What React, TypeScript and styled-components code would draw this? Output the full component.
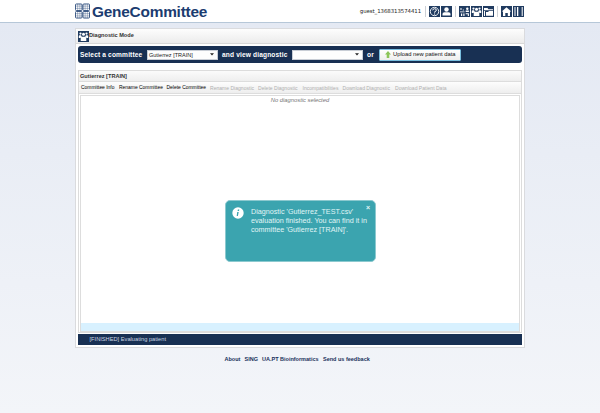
import React from 'react';
import styled, { createGlobalStyle } from 'styled-components';

const NAVY = '#18305a';
const BAR = '#183053';

const GlobalStyle = createGlobalStyle`
  * { box-sizing: border-box; }
  html, body { margin: 0; height: 413px; overflow: hidden; }
  body {
    font-family: 'Liberation Sans', Arial, sans-serif;
    background: linear-gradient(#e4e9f3 23px, #f3f5f9 413px);
    color: #222;
  }
`;

const Page = styled.div`
  position: relative;
  width: 600px;
  height: 413px;
  display: flex;
  flex-direction: column;
  align-items: center;
`;

const Header = styled.header`
  width: 600px;
  height: 23px;
  padding: 0 76px 0 75px;
  display: flex;
  align-items: center;
  background: #fff;
  border-bottom: 1px solid #b6c7d8;
`;

const Brand = styled.h1`
  margin: 1px auto 0 2px;
  font-size: 15.4px;
  line-height: 20px;
  font-weight: bold;
  letter-spacing: -0.22px;
  color: #1b3c70;
  white-space: nowrap;
`;

const User = styled.span`
  font: 5.4px/10px 'DejaVu Sans', Verdana, sans-serif;
  letter-spacing: -0.06px;
  color: #222;
  margin-right: 4px;
`;

const Tools = styled.nav`
  display: flex;
  gap: 1px;
  padding: 0 3px;
  border-left: 1px solid #ccd0d6;
  &:last-child { padding-right: 0; }
`;

const Icon = styled.svg`
  display: block;
  flex: none;
`;

const Main = styled.main`
  width: 450px;
  height: 320px;
  margin-top: 5px;
  padding: 0 2px;
  background: #fff;
  border: 1px solid #dadbde;
`;

const TitleBar = styled.div`
  height: 15px;
  margin: 0 -2px 2px;
  padding-left: 2px;
  display: flex;
  align-items: center;
  background: linear-gradient(#fdfdfd, #ececec);
  border-bottom: 1px solid #d8d8d8;
`;

const Title = styled.h2`
  margin: 0;
  font-size: 5.6px;
  line-height: 11px;
  font-weight: bold;
  color: #333;
`;

const ModeTitle = styled(Title)`
  padding-bottom: 1px;
`;

const Selector = styled.div`
  height: 17px;
  padding: 0 2px;
  display: flex;
  align-items: center;
  background: ${BAR};
  border-radius: 3px;
`;

const Prompt = styled.span<{ $width: number }>`
  width: ${p => p.$width}px;
  font: bold 6.6px/11px 'Liberation Sans', Arial, sans-serif;
  letter-spacing: 0.15px;
  white-space: nowrap;
  color: #fff;
`;

const Select = styled.div`
  width: 71px;
  height: 10px;
  margin-right: 4px;
  padding: 0 3px 0 1px;
  display: flex;
  align-items: center;
  justify-content: space-between;
  background: #fdfdfd;
  border: 1px solid #c8cdd5;
  font-size: 5.5px;
  line-height: 8px;
`;

const Upload = styled.button`
  width: 82px;
  height: 12px;
  padding: 0 0 0 5px;
  display: flex;
  align-items: center;
  gap: 2px;
  background: linear-gradient(#fff, #eee);
  border: 1px solid #79bfe0;
  border-radius: 1px;
  font: 5.8px/9px 'Liberation Sans', Arial, sans-serif;
  color: #111;
  white-space: nowrap;
`;

const Committee = styled.section`
  height: 263px;
  margin-top: 7px;
  border: 1px solid #dcdcdc;
  display: flex;
  flex-direction: column;
`;

const CommitteeHead = styled.div`
  height: 11px;
  padding-left: 1px;
  background: linear-gradient(#fbfbfb, #eee);
  border-bottom: 1px solid #ddd;
`;

const Menu = styled.div`
  height: 12px;
  padding-left: 2px;
  display: flex;
  align-items: center;
  background: linear-gradient(#fdfdfd, #eee);
  border-bottom: 1px solid #ddd;
`;

const MenuItem = styled.span<{ $width: number; $off?: boolean }>`
  width: ${p => p.$width}px;
  flex: none;
  font-size: ${p => (p.$off ? 5.05 : 4.95)}px;
  line-height: 10px;
  white-space: nowrap;
  color: ${p => (p.$off ? '#b0b0b0' : '#000')};
`;

const Content = styled.div`
  flex: 1;
  margin: 1px 1px 0;
  border: 1px solid #ddd;
  display: flex;
  flex-direction: column;
  justify-content: space-between;
  text-align: center;
  font-size: 5.8px;
  line-height: 8px;
  font-style: italic;
  color: #777;
`;

const Strip = styled.div`
  height: 8px;
  background: #d8f1ff;
`;

const Status = styled.div`
  height: 11px;
  margin-top: 1px;
  padding-left: 11.5px;
  background: ${BAR};
  color: #ccd6e2;
  font-size: 5.7px;
  line-height: 11px;
`;

const Footer = styled.footer`
  margin-top: 6px;
  width: 151px;
  display: flex;
  font-size: 5.5px;
  line-height: 10px;
  font-weight: bold;
  color: ${NAVY};
  white-space: nowrap;
`;

const Link = styled.a<{ $width: number }>`
  width: ${p => p.$width}px;
  flex: none;
`;

const Toast = styled.aside`
  position: absolute;
  left: 225px;
  top: 200px;
  width: 151px;
  height: 62px;
  padding: 6px;
  display: flex;
  gap: 7px;
  background: #3ba4af;
  border: 1px solid #8cc9cf;
  border-radius: 5px;
  color: #e0f5f6;
`;

const Message = styled.p`
  margin: 0;
  font-size: 7.2px;
  line-height: 9px;
  white-space: nowrap;
`;

const Close = styled.span`
  position: absolute;
  right: 5px;
  top: 2px;
  font-size: 7px;
  line-height: 9px;
  font-weight: bold;
`;

const quadrants = [[0.5, 0.5], [8.5, 0.5], [0.5, 8.5], [8.5, 8.5]];

function Logo() {
  return (
    <Icon width="15" height="16" viewBox="0 0 16 16" fill="none" stroke="#1d3f72">
      {quadrants.map(([x, y]) => (
        <g key={`${x}-${y}`} transform={`translate(${x} ${y})`}>
          <rect width="7" height="7" rx="1" strokeWidth=".9" />
          <path d="M2.3 0v7M4.7 0v7M0 2.3h7M0 4.7h7" strokeWidth=".6" opacity=".6" />
        </g>
      ))}
    </Icon>
  );
}

function Tool({ children }: { children: React.ReactNode }) {
  return (
    <Icon width="11" height="11" viewBox="0 0 11 11" fill="#fff">
      <rect width="11" height="11" fill="#203b60" />
      {children}
    </Icon>
  );
}

const group = (
  <>
    <circle cx="2.5" cy="2.6" r="1.1" />
    <circle cx="8.5" cy="2.6" r="1.1" />
    <circle cx="5.5" cy="3.3" r="1.5" />
    <path d="M.8 7V5q0-.8 1-.8h1.3q.2 1 .9 1.5L2.3 7ZM10.200 7V5q0-.8-1-.8H7.900q-.2 1-.9 1.500L8.700 7ZM2.700 10V7.500q0-1.800 1.500-1.800h2.600q1.500 0 1.500 1.800V10Z" />
  </>
);

const Caret = () => (
  <Icon width="4" height="3" viewBox="0 0 4 3"><path d="M0 .3h4L2 2.5Z" fill="#222" /></Icon>
);

const actions: [string, number, boolean?][] = [
  ['Committee Info', 38],
  ['Rename Committee', 47.5],
  ['Delete Committee', 43.5],
  ['Rename Diagnostic', 48, true],
  ['Delete Diagnostic', 44.5, true],
  ['Incompatibilities', 40, true],
  ['Download Diagnostic', 52.5, true],
  ['Download Patient Data', 55, true],
];

export default function App() {
  return (
    <Page>
      <GlobalStyle />
      <Header>
        <Logo />
        <Brand>GeneCommittee</Brand>
        <User>guest_1368313574411</User>
        <Tools>
          <Tool>
            <circle cx="5.5" cy="5.5" r="4.2" fill="none" stroke="#fff" strokeWidth=".9" />
            <path d="M3.7 4.3q.2-1.6 1.9-1.6t1.8 1.5q0 1-1.7 1.5v1M5.6 7.5v1.1" fill="none" stroke="#fff" strokeWidth="1" />
          </Tool>
          <Tool>
            <circle cx="5.5" cy="3.5" r="2.2" />
            <path d="M1.5 9.5V8q0-1.5 2-1.7h4q2 .2 2 1.700v1.500Z" />
          </Tool>
        </Tools>
        <Tools>
          <Tool>
            <path d="M1 5.5h4.5v.8H1ZM2 7.5h1.2V10H2ZM4.3 7.5h1.2V10H4.3ZM1.5 2h1v2h-1ZM3.8 3.5h1v1h-1Z" />
            <circle cx="8.3" cy="2.7" r="1.2" />
            <path d="M6.7 6V4.5h3.2V6ZM6.7 7.2h3.2V10H8.8V8.3H6.7Z" />
          </Tool>
          <Tool>{group}</Tool>
          <Tool>
            <path d="M1 2h3.5l1 1.200H10v1H1ZM1 5h1v5H1ZM3 6h2l1-1h4v4.800H3Z" />
          </Tool>
        </Tools>
        <Tools>
          <Tool>
            <path d="m5.5 1.200 4.700 4.300H9V10H6.800V7H4.300v3H2V5.500H.8Z" />
          </Tool>
          <Tool>
            <path d="M1.5 1h1v9h-1ZM4 1h1.300v9H4ZM8.700 1h1v9h-1Z" />
          </Tool>
        </Tools>
      </Header>
      <Main>
        <TitleBar>
          <Tool>{group}</Tool>
          <ModeTitle>Diagnostic Mode</ModeTitle>
        </TitleBar>
        <Selector>
          <Prompt $width={67}>Select a committee</Prompt>
          <Select>Gutierrez [TRAIN]<Caret /></Select>
          <Prompt $width={70}>and view diagnostic</Prompt>
          <Select><span /><Caret /></Select>
          <Prompt $width={12}>or</Prompt>
          <Upload>
            <Icon width="6" height="7" viewBox="0 0 6 7"><path d="M3 0 6 3.5H4.3V7H1.7V3.5H0Z" fill="#8cc55a" /></Icon>
            Upload new patient data
          </Upload>
        </Selector>
        <Committee>
          <CommitteeHead><Title>Gutierrez [TRAIN]</Title></CommitteeHead>
          <Menu>
            {actions.map(([label, width, off]) => (
              <MenuItem key={label} $width={width} $off={off}>{label}</MenuItem>
            ))}
          </Menu>
          <Content>
            No diagnostic selected
            <Strip />
          </Content>
        </Committee>
        <Status>[FINISHED] Evaluating patient</Status>
      </Main>
      <Footer>
        <Link $width={20}>About</Link>
        <Link $width={17.5}>SING</Link>
        <Link $width={61}>UA.PT Bioinformatics</Link>
        <Link $width={48}>Send us feedback</Link>
      </Footer>
      <Toast>
        <Icon width="12" height="12" viewBox="0 0 12 12">
          <circle cx="6" cy="6" r="5.7" fill="#fff" />
          <path d="M5.2 5h1.5l-.8 4H4.7ZM5.9 2.5h1.4L7 3.9H5.6Z" fill="#3ba4af" />
        </Icon>
        <Message>
          Diagnostic 'Gutierrez_TEST.csv'<br />
          evaluation finished. You can find it in<br />
          committee 'Gutierrez [TRAIN]'.
        </Message>
        <Close>×</Close>
      </Toast>
    </Page>
  );
}
